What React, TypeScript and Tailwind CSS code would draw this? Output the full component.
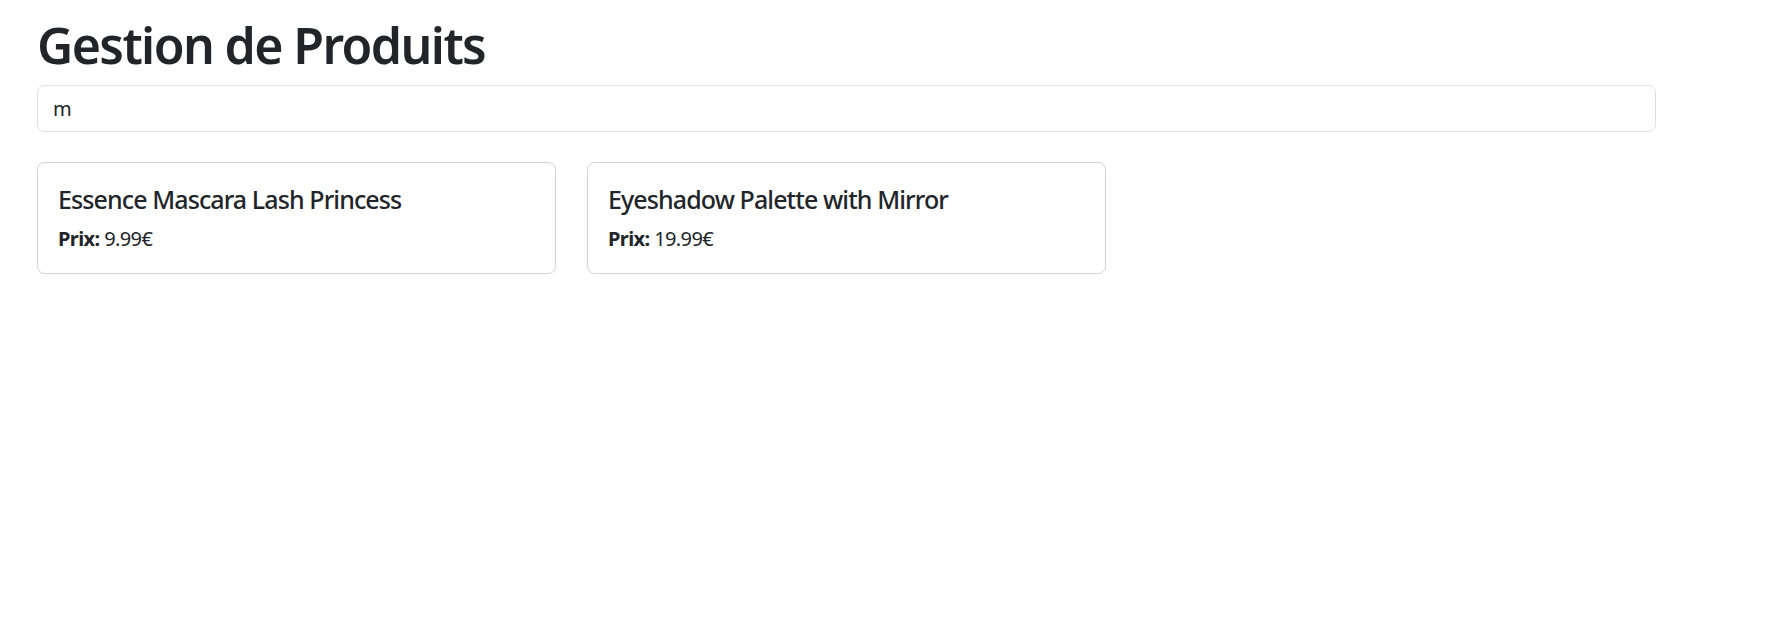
const products = [
  { title: "Essence Mascara Lash Princess", price: 9.99 },
  { title: "Eyeshadow Palette with Mirror", price: 19.99 },
];

export default function App() {
  return (
    <div className="min-h-screen bg-white text-[#212529] font-['Noto_Sans',sans-serif]">
      <div className="pl-[37px] pt-[15px]">
        <h1 className="text-[50px] leading-[60px] font-semibold tracking-[-1.6px] mb-[10px]">
          Gestion de Produits
        </h1>

        <input
          type="text"
          defaultValue="m"
          className="block w-[1619px] h-[47px] px-[15px] text-[20px] border border-[#dee2e6] rounded-[7.5px] outline-none"
        />

        <div className="flex gap-[31px] mt-[30px]">
          {products.map((p) => (
            <div
              key={p.title}
              className="w-[519px] border border-[#d3d3d3] rounded-[7.5px] px-[20px] pt-[21px] pb-[19px]"
            >
              <h5 className="text-[25px] leading-[30px] font-medium tracking-[-0.9px] mb-[10px]">
                {p.title}
              </h5>
              <p className="text-[20px] leading-[30px] tracking-[-0.6px]">
                <strong className="font-bold">Prix:</strong> {p.price}€
              </p>
            </div>
          ))}
        </div>
      </div>
    </div>
  );
}
